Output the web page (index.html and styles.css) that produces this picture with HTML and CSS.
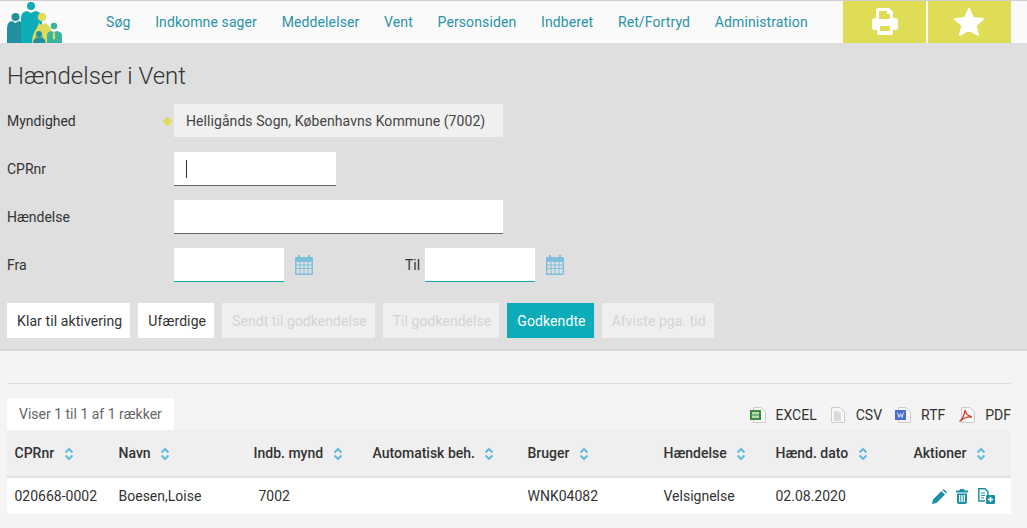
FILE: index.html
```html
<!DOCTYPE html>
<html lang="da">
<head>
<meta charset="utf-8">
<title>Hændelser i Vent</title>
<link rel="stylesheet" href="styles.css">
</head>
<body>
<header class="topbar">
  <svg class="logo" width="56" height="42" viewBox="0 0 56 42">
    <circle cx="8.500" cy="16" r="4" fill="#23909f"/>
    <path d="M0 42V27q0-6 5-7l3.500 2 3.500-2q2 .5 3 2v20z" fill="#23909f"/>
    <circle cx="24" cy="5" r="4" fill="#0cadb8"/>
    <path d="M14 42V17q0-6 6-7l4 2 4-2q7 1 7 7v25z" fill="#0cadb8"/>
    <circle cx="35" cy="16" r="4.300" fill="#dfdc55"/>
    <path d="M25 42q0-7 3-12t4-8l3 2 3-2 3 2q5 4 4 18z" fill="#dfdc55"/>
    <circle cx="47" cy="25" r="3.300" fill="#3cb5a0"/>
    <path d="M40 42v-8q0-3 4-4l3 1 3-1q5 1 5 4v8z" fill="#3cb5a0"/>
    <path d="M46.300 31h1.400l.5 6-1.200 2-1.200-2z" fill="#dfdc55"/>
    <circle cx="32" cy="33" r="3" fill="#23909f"/>
    <path d="M28 35.500h8v1h-8z" fill="#23909f"/>
    <path d="M26 42v-1q0-4 6-4.500t6.500 4.500v1z" fill="#23909f"/>
  </svg>
  <nav class="nav">
    <a>Søg</a><a>Indkomne sager</a><a>Meddelelser</a><a>Vent</a><a>Personsiden</a><a>Indberet</a><a>Ret/Fortryd</a><a>Administration</a>
  </nav>
  <div class="tools">
    <button class="tool" aria-label="Print">
      <svg width="30" height="30" viewBox="0 0 30 30"><path fill="#fff" fill-rule="evenodd" d="M8 2h11l4 4v6h2q3 0 3 3v7q0 2-2 2h-3v3q0 2-2 2H9q-2 0-2-2v-3H4q-2 0-2-2v-7q0-3 3-3h1V4q0-2 2-2zm1 3v8h11V8h-3V5zm1 15v5h10v-5z"/></svg>
    </button>
    <button class="tool" aria-label="Favorit">
      <svg width="32" height="30" viewBox="1 0 32 30"><path fill="#fff" stroke="#fff" stroke-width="2" stroke-linejoin="round" d="M16 3l4 9 10 1-7.500 6.500L25 29l-9-5-9 5 2.500-9.500L2 13l10-1z"/></svg>
    </button>
  </div>
</header>

<section class="panel">
  <h1 class="title">Hændelser i Vent</h1>
  <div class="row">
    <label class="label">Myndighed</label>
    <span class="req"></span>
    <div class="static">Helligånds Sogn, Københavns Kommune (7002)</div>
  </div>
  <div class="row">
    <label class="label">CPRnr</label>
    <div class="input small"><span class="caret"></span></div>
  </div>
  <div class="row">
    <label class="label">Hændelse</label>
    <div class="input wide"></div>
  </div>
  <div class="row">
    <label class="label">Fra</label>
    <div class="input date"></div>
    <svg class="cal" viewBox="0 0 18 20"><use href="#cal"/></svg>
    <label class="til">Til</label>
    <div class="input date"></div>
    <svg class="cal" viewBox="0 0 18 20"><use href="#cal"/></svg>
  </div>
  <div class="filters">
    <button class="btn">Klar til aktivering</button>
    <button class="btn">Ufærdige</button>
    <button class="btn off">Sendt til godkendelse</button>
    <button class="btn off">Til godkendelse</button>
    <button class="btn on">Godkendte</button>
    <button class="btn off">Afviste pga. tid</button>
  </div>
</section>

<main class="results">
  <hr class="rule">
  <div class="toolbar">
    <div class="count">Viser 1 til 1 af 1 rækker</div>
    <div class="exports">
      <span class="exp"><svg class="file" viewBox="0 0 16 16"><path d="M3.500.5H11L15.500 5v10.500h-12z" fill="#f7f7f7" stroke="#ccc"/><rect y="3" width="11" height="10" fill="#3f8a3f"/><rect x="2" y="5" width="7" height="6" fill="#b7dcb7"/><path d="M2 8h7" stroke="#3f8a3f"/></svg>EXCEL</span>
      <span class="exp"><svg class="file" viewBox="0 0 16 16"><path d="M1.500.5H10L14.500 5v10.500h-13z" fill="#f7f7f7" stroke="#ccc"/><path d="M4 5h5M4 7h7M4 9h7M4 11h7M4 13h7" stroke="#bbb"/></svg>CSV</span>
      <span class="exp"><svg class="file" viewBox="0 0 16 16"><path d="M3.500.5H11L15.500 5v10.500h-12z" fill="#f7f7f7" stroke="#ccc"/><rect y="3" width="11" height="10" fill="#4a6fd0"/><path d="M2.500 5.500l1.500 5 1.500-4 1.500 4 1.500-5" fill="none" stroke="#dbe4f8"/></svg>RTF</span>
      <span class="exp pdf"><svg class="file" viewBox="0 0 16 16"><path d="M2.500.5H11L15.500 5v10.500h-13z" fill="#f7f7f7" stroke="#ccc"/><path d="M.5 14.500Q5 11 6 3q.5 5 7 7-7-.5-12.500 4.500z" fill="none" stroke="#d8352a" stroke-width="1.300"/></svg>PDF</span>
    </div>
  </div>
  <table class="grid">
    <thead>
      <tr>
        <th class="c1">CPRnr<svg class="sort" viewBox="0 0 10 14"><use href="#sort"/></svg></th>
        <th class="c2">Navn<svg class="sort" viewBox="0 0 10 14"><use href="#sort"/></svg></th>
        <th class="c3">Indb. mynd<svg class="sort" viewBox="0 0 10 14"><use href="#sort"/></svg></th>
        <th class="c4">Automatisk beh.<svg class="sort" viewBox="0 0 10 14"><use href="#sort"/></svg></th>
        <th class="c5">Bruger<svg class="sort" viewBox="0 0 10 14"><use href="#sort"/></svg></th>
        <th class="c6">Hændelse<svg class="sort" viewBox="0 0 10 14"><use href="#sort"/></svg></th>
        <th class="c7">Hænd. dato<svg class="sort" viewBox="0 0 10 14"><use href="#sort"/></svg></th>
        <th class="c8">Aktioner<svg class="sort" viewBox="0 0 10 14"><use href="#sort"/></svg></th>
      </tr>
    </thead>
    <tbody>
      <tr>
        <td>020668-0002</td>
        <td>Boesen,Loise</td>
        <td class="num">7002</td>
        <td></td>
        <td>WNK04082</td>
        <td>Velsignelse</td>
        <td>02.08.2020</td>
        <td>
          <div class="acts">
            <svg width="15" height="15" viewBox="0 0 15 15"><path fill="#1d8fa3" d="M0 15l1-4.500L9.500 2 13 5.500 4.500 14zM10.500 1l.5-.5q.6-.5 1.200 0l2.300 2.300q.5.600 0 1.200l-.5.500z"/></svg>
            <svg width="12" height="15" viewBox="0 0 12 15"><path fill="#1d8fa3" fill-rule="evenodd" d="M4 0h4l.7 1.500H12v2H0v-2h3.300zM1 4.500h10V13q0 2-2 2H3q-2 0-2-2zM3 6v7h1.300V6zm2.300 0v7h1.400V6zm2.400 0v7H9V6z"/></svg>
            <svg class="addfile" width="17" height="16" viewBox="0 0 17 16"><path fill="none" stroke="#1d8fa3" stroke-width="1.500" d="M7 13H.8V.8H7L10 4v3"/><path stroke="#1d8fa3" d="M3 5h4M3 7.500h4M3 10h3"/><rect x="8" y="7" width="9" height="9" rx="1" fill="#1d8fa3"/><path stroke="#fff" stroke-width="1.500" d="M12.500 9v5M10 11.500h5"/></svg>
          </div>
        </td>
      </tr>
    </tbody>
  </table>
</main>

<svg class="defs" width="0" height="0">
  <symbol id="cal" viewBox="0 0 18 20">
    <path fill="#7fbfdc" fill-rule="evenodd" d="M3 0h2v2h8V0h2v2h2q1 0 1 1v16q0 1-1 1H1q-1 0-1-1V3q0-1 1-1h2zM1.500 7v2.500h3V7zm4 0v2.500h3V7zm4 0v2.500h3V7zm4 0v2.500h3V7zm-12 3.500V13h3v-2.500zm4 0V13h3v-2.500zm4 0V13h3v-2.500zm4 0V13h3v-2.500zm-12 3.500v4.500h3V14zm4 0v4.500h3V14zm4 0v4.500h3V14zm4 0v4.500h3V14z"/>
  </symbol>
  <symbol id="sort" viewBox="0 0 10 14">
    <path fill="none" stroke="#5db6d8" stroke-width="1.800" d="M1.500 5.500L5 2l3.500 3.500M1.500 8.500L5 12l3.500-3.500"/>
  </symbol>
</svg>
</body>
</html>
```

FILE: styles.css
```css
* { box-sizing: border-box; }
html, body { margin: 0; padding: 0; }
body {
  width: 1027px;
  height: 528px;
  overflow: hidden;
  background: #f4f4f4;
  font-family: Roboto, "Liberation Sans", sans-serif;
  font-size: 14px;
  color: #333;
}
.defs { position: absolute; }

.topbar {
  display: flex;
  height: 43px;
  background: #fafafa;
  border-top: 1px solid #cfcfcf;
}
.logo { margin-left: 7px; flex: none; align-self: flex-end; }
.nav { display: flex; gap: 24.700px; margin-left: 43px; align-items: center; flex: 1; padding-bottom: 1px; }
.nav a { color: #2a93a8; font-size: 14px; letter-spacing: .11px; }
.tools { display: flex; gap: 2px; margin-right: 16px; }
.tool {
  width: 83px;
  border: 0;
  padding: 0 0 2px;
  background: #dfdc55;
  display: flex;
  align-items: center;
  justify-content: center;
}

.panel {
  height: 308px;
  background: #dfdfdf;
  border-bottom: 2px solid #d6d6d6;
  padding: 18px 7px 0;
}
.title { margin: 0 0 13px; font-size: 24px; line-height: 30px; font-weight: 300; color: #333; }
.row { display: flex; align-items: center; height: 34px; margin-bottom: 14px; }
.label { width: 167px; flex: none; }
.req {
  width: 7px; height: 7px; margin-left: -10px; margin-right: 3px;
  background: #dfdc55; transform: rotate(45deg); flex: none;
}
.static {
  background: #f0f0f0; height: 33px; width: 329px; line-height: 34px; padding-left: 12px;
  color: #444; letter-spacing: .07px; align-self: flex-start;
}
.input { background: #fff; height: 34px; border-bottom: 1px solid #666; }
.small { width: 162px; display: flex; align-items: center; padding-left: 12px; }
.caret { width: 1px; height: 18px; background: #333; }
.wide { width: 329px; }
.date { width: 110px; border-bottom-color: #0cadb8; }
.cal { width: 18px; height: 20px; margin-left: 11px; }
.til { margin-left: 92px; width: 20px; }
.filters { display: flex; gap: 8px; margin-top: 21px; }
.btn {
  height: 35px;
  border: 0;
  padding: 0 8px 0 10px;
  font: inherit;
  letter-spacing: .1px;
  background: #fff;
  color: #333;
}
.btn.off { background: #efefef; color: #d4d4d4; letter-spacing: .05px; }
.btn.on { background: #0cadb8; color: #fff; }

.results { padding: 32px 16px 0 7px; }
.rule { margin: 0; border: 0; border-top: 1px solid #ddd; }
.toolbar { display: flex; justify-content: space-between; align-items: flex-end; margin-top: 14px; height: 32px; }
.count { background: #fff; height: 32px; line-height: 32px; padding: 0 12px; color: #666; }
.exports { display: flex; gap: 13px; padding-bottom: 7px; }
.exp { display: flex; align-items: center; gap: 10px; }
.pdf { margin-left: 1px; }
.file { width: 16px; height: 16px; }

.grid { width: 1004px; border-collapse: collapse; table-layout: fixed; }
.grid th {
  background: #efefef;
  height: 47px;
  text-align: left;
  padding: 0 0 0 7.5px;
  font-weight: 500;
  border-bottom: 2px solid #e0e0e0;
}
.grid td { background: #fff; height: 37px; padding: 0 0 0 7.5px; color: #333; }
.sort { width: 10px; height: 14px; margin-left: 9.500px; vertical-align: -3px; }
.c1 { width: 104px; } .c2 { width: 135px; } .c3 { width: 119px; } .c4 { width: 155px; }
.c5 { width: 136px; } .c6 { width: 112px; } .c7 { width: 138px; } .c8 { width: 105px; }
.grid td.num { padding-left: 12.500px; }
.acts { display: flex; align-items: center; gap: 9px; padding-left: 18.500px; }
.addfile { margin-left: 1px; }
```
